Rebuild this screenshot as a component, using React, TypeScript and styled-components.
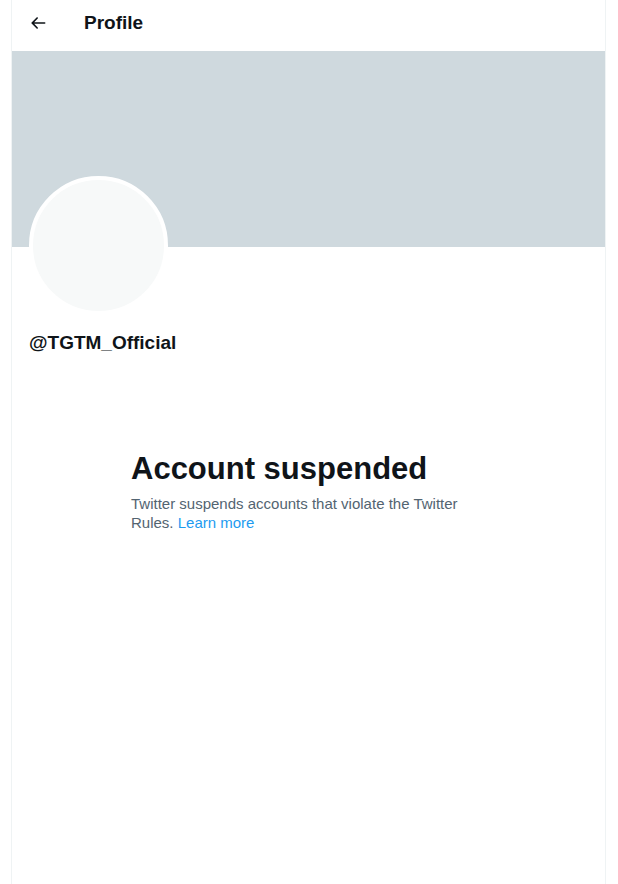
import React from "react";
import styled, { createGlobalStyle } from "styled-components";

const Global = createGlobalStyle`
  html, body { margin: 0; padding: 0; background: #ffffff; }
  body { font-family: "Liberation Sans", Arial, sans-serif; color: #0f1419; }
`;

const Page = styled.div`
  display: flex;
  justify-content: flex-start;
  padding-left: 11px;
  min-height: 884px;
`;

const Column = styled.main`
  width: 593px;
  min-height: 884px;
  border-left: 1px solid #eff3f4;
  border-right: 1px solid #eff3f4;
  display: flex;
  flex-direction: column;
`;

const Header = styled.header`
  height: 51px;
  display: flex;
  align-items: center;
  padding: 0 16px 5px;
  box-sizing: border-box;
`;

const BackButton = styled.button`
  width: 56px;
  height: 36px;
  padding: 0;
  margin: 0;
  border: none;
  background: transparent;
  display: flex;
  align-items: center;
  justify-content: flex-start;
  color: #0f1419;
  cursor: pointer;
  svg { width: 20px; height: 20px; display: block; }
`;

const Title = styled.h2`
  margin: 0;
  font-size: 19px;
  line-height: 24px;
  font-weight: 700;
  color: #0f1419;
`;

const Banner = styled.div`
  height: 196px;
  background: #cfd9de;
`;

const ProfileInfo = styled.section`
  padding: 0 17px;
  display: flex;
  flex-direction: column;
  align-items: flex-start;
`;

const Avatar = styled.div`
  width: 139px;
  height: 139px;
  margin-top: -71px;
  box-sizing: border-box;
  border-radius: 50%;
  border: 4px solid #ffffff;
  background: #f7f9f9;
`;

const Handle = styled.div`
  margin-top: 16px;
  font-size: 19px;
  line-height: 24px;
  font-weight: 700;
  color: #0f1419;
`;

const EmptyState = styled.div`
  width: 355px;
  margin: 96px auto 0;
  display: flex;
  flex-direction: column;
`;

const Heading = styled.h1`
  margin: 0 0 7px;
  font-size: 31px;
  line-height: 36px;
  font-weight: 700;
  color: #0f1419;
`;

const Body = styled.p`
  margin: 0;
  font-size: 15px;
  line-height: 19px;
  color: #536471;
`;

const Link = styled.a`
  color: #1d9bf0;
  text-decoration: none;
`;

export default function App() {
  return (
    <>
      <Global />
      <Page>
        <Column>
          <Header>
            <BackButton aria-label="Back">
              <svg viewBox="0 0 24 24" aria-hidden="true">
                <path
                  fill="currentColor"
                  d="M20 11H7.414l4.293-4.293c.39-.39.39-1.023 0-1.414s-1.023-.39-1.414 0l-6 6c-.39.39-.39 1.023 0 1.414l6 6c.195.195.45.293.707.293s.512-.098.707-.293c.39-.39.39-1.023 0-1.414L7.414 13H20c.553 0 1-.447 1-1s-.447-1-1-1z"
                />
              </svg>
            </BackButton>
            <Title>Profile</Title>
          </Header>
          <Banner />
          <ProfileInfo>
            <Avatar />
            <Handle>@TGTM_Official</Handle>
          </ProfileInfo>
          <EmptyState>
            <Heading>Account suspended</Heading>
            <Body>
              Twitter suspends accounts that violate the Twitter Rules.{" "}
              <Link href="#">Learn more</Link>
            </Body>
          </EmptyState>
        </Column>
      </Page>
    </>
  );
}
